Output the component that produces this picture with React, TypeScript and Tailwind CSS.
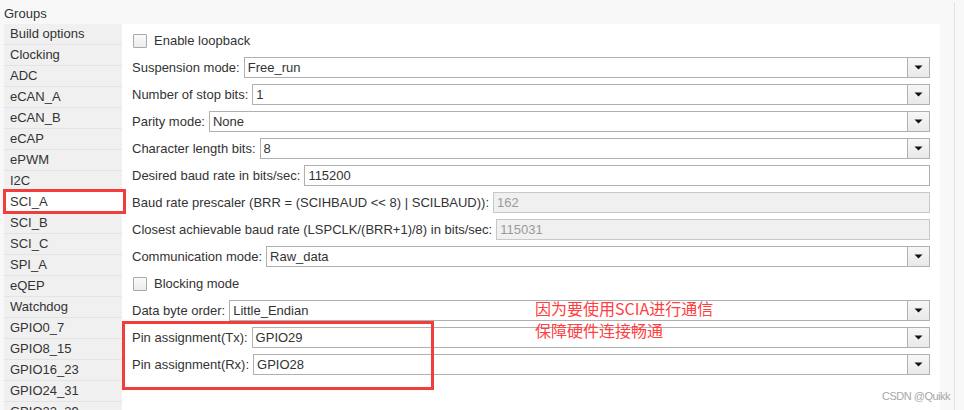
import React from 'react';

const groups = [
    'Build options',
    'Clocking',
    'ADC',
    'eCAN_A',
    'eCAN_B',
    'eCAP',
    'ePWM',
    'I2C',
    'SCI_A',
    'SCI_B',
    'SCI_C',
    'SPI_A',
    'eQEP',
    'Watchdog',
    'GPIO0_7',
    'GPIO8_15',
    'GPIO16_23',
    'GPIO24_31',
    'GPIO32_39',
];

type Row =
    | { kind: 'check'; label: string }
    | { kind: 'select'; label: string; value: string }
    | { kind: 'text'; label: string; value: string }
    | { kind: 'readonly'; label: string; value: string };

const rows: Row[] = [
    { kind: 'check', label: 'Enable loopback' },
    { kind: 'select', label: 'Suspension mode:', value: 'Free_run' },
    { kind: 'select', label: 'Number of stop bits:', value: '1' },
    { kind: 'select', label: 'Parity mode:', value: 'None' },
    { kind: 'select', label: 'Character length bits:', value: '8' },
    { kind: 'text', label: 'Desired baud rate in bits/sec:', value: '115200' },
    { kind: 'readonly', label: 'Baud rate prescaler (BRR = (SCIHBAUD << 8) | SCILBAUD)):', value: '162' },
    { kind: 'readonly', label: 'Closest achievable baud rate (LSPCLK/(BRR+1)/8) in bits/sec:', value: '115031' },
    { kind: 'select', label: 'Communication mode:', value: 'Raw_data' },
    { kind: 'check', label: 'Blocking mode' },
    { kind: 'select', label: 'Data byte order:', value: 'Little_Endian' },
    { kind: 'select', label: 'Pin assignment(Tx):', value: 'GPIO29' },
    { kind: 'select', label: 'Pin assignment(Rx):', value: 'GPIO28' },
];

const Arrow = () => (
    <svg width="9" height="5" viewBox="0 0 9 5">
        <polygon points="0.5,0.5 8.5,0.5 4.5,4.5" fill="#111" />
    </svg>
);

const FieldRow: React.FC<{ row: Row }> = ({ row }) => {
    if (row.kind === 'check') {
        return (
            <div className="h-[27px] flex items-center pl-[1px]">
                <span className="w-[14px] h-[14px] border border-[#a9a9a9] bg-gradient-to-b from-[#fafafa] to-[#ececec] rounded-[1px]" />
                <span className="ml-[7px]">{row.label}</span>
            </div>
        );
    }
    return (
        <div className="h-[27px] flex items-center">
            <span className="whitespace-nowrap">{row.label}</span>
            {row.kind === 'select' && (
                <div className="ml-[4px] flex-1 h-[21px] flex border border-[#b0b0b0] bg-white">
                    <span className="flex-1 pl-[3px] leading-[19px]">{row.value}</span>
                    <span className="w-[22px] border-l border-[#b0b0b0] bg-gradient-to-b from-[#f7f7f7] to-[#e9e9e9] flex items-center justify-center">
                        <Arrow />
                    </span>
                </div>
            )}
            {row.kind === 'text' && (
                <div className="ml-[4px] flex-1 h-[21px] border border-[#b0b0b0] bg-white pl-[3px] leading-[19px]">
                    {row.value}
                </div>
            )}
            {row.kind === 'readonly' && (
                <div className="ml-[4px] flex-1 h-[21px] border border-[#c8c8c8] bg-[#f0f0f0] pl-[3px] leading-[19px] text-[#9a9a9a]">
                    {row.value}
                </div>
            )}
        </div>
    );
};

const App: React.FC = () => {
    return (
        <div className="relative w-[964px] h-[410px] overflow-hidden bg-[#f8f8f8] text-[13px] text-[#333] font-['Liberation_Sans',Arial,sans-serif] flex">
            <div className="w-[940px] flex flex-col">
                <div className="h-[24px] pl-[4px] pt-[6px] leading-4">Groups</div>
                <div className="flex flex-1 min-h-0">
                    <div className="ml-[4px] w-[118px] flex flex-col">
                        {groups.map(g => (
                            <div
                                key={g}
                                className={
                                    g === 'SCI_A'
                                        ? 'h-[21px] shrink-0 pl-[6px] leading-[20px] bg-white border-b border-[#e4e4e4]'
                                        : 'h-[21px] shrink-0 pl-[6px] leading-[20px] bg-[#f0f0f0] border-b border-[#e4e4e4]'
                                }
                            >
                                {g}
                            </div>
                        ))}
                    </div>
                    <div className="flex-1 bg-white rounded-tr-[4px] pt-[3px] pl-[10px] pr-[10px]">
                        {rows.map(r => (
                            <FieldRow key={r.label} row={r} />
                        ))}
                    </div>
                </div>
            </div>
            <div className="flex-1 flex pl-[14px]">
                <div className="w-[1px] mt-[2px] bg-[#e2e2e2] rounded-t" />
            </div>

            {/* annotations */}
            <div className="absolute left-[3px] top-[189px] w-[123px] h-[25px] border-[3px] border-[#f23d3d]" />
            <div className="absolute left-[122px] top-[321px] w-[312px] h-[69px] border-[3px] border-[#f23d3d]" />
            <div className="absolute left-[535px] top-[297px] text-[16px] leading-[22px] text-[#ff4040] font-['Noto_Sans_CJK_SC',sans-serif]">
                <div>因为要使用SCIA进行通信</div>
                <div>保障硬件连接畅通</div>
            </div>
            <div className="absolute left-[882px] top-[389px] whitespace-nowrap text-[11px] leading-[14px] tracking-[-0.5px] text-[#a8a8a8] font-['Liberation_Sans',sans-serif]">
                CSDN @Quikk
            </div>
        </div>
    );
};

export default App;
